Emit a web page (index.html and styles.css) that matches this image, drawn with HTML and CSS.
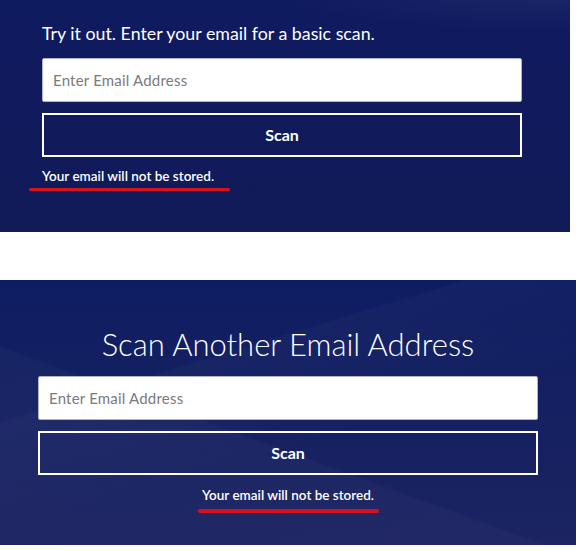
FILE: index.html
```html
<!DOCTYPE html>
<html lang="en">

<head>
    <meta charset="UTF-8">
    <title>Email Scan</title>
    <link rel="stylesheet" href="styles.css">
</head>

<body>
    <!-- basic scan -->
    <section class="panel panel-try">
        <h2 class="try-title">Try it out. Enter your email for a basic scan.</h2>
        <form class="scan-form">
            <input class="email-input" type="email" placeholder="Enter Email Address">
            <button class="scan-button" type="button">Scan</button>
        </form>
        <p class="note">Your email will not be stored.</p>
        <div class="red-rule"></div>
    </section>

    <!-- scan again -->
    <section class="panel panel-again">
        <h1 class="again-title">Scan Another Email Address</h1>
        <form class="scan-form">
            <input class="email-input" type="email" placeholder="Enter Email Address">
            <button class="scan-button" type="button">Scan</button>
        </form>
        <p class="note">Your email will not be stored.</p>
        <div class="red-rule"></div>
    </section>
</body>

</html>
```

FILE: styles.css
```css
/*--page------------------------------------------------------------------------*/
html {
    background: #fff;
}
body {
    margin: 0;
    padding: 0;
    font-family: Lato, "Open Sans", sans-serif;
    color: #fff;
}

.panel {
    box-sizing: border-box;
    display: flex;
    flex-direction: column;
    background-color: #101b5e;
}

/*--top block--------------------------------------------------------------------*/
.panel-try {
    width: 570px;
    height: 232px;
    padding: 20px 48px 0 42px;
    background-image:
        radial-gradient(ellipse 420px 60px at 560px -10px, rgba(255,255,255,0.05), rgba(255,255,255,0) 70%),
        linear-gradient(180deg, #0f1b60 0%, #121a58 100%);
}
.try-title {
    margin: 0;
    font-size: 17.8px;
    line-height: 26px;
    font-weight: 400;
}

/*--bottom block-----------------------------------------------------------------*/
.panel-again {
    width: 100%;
    height: 265px;
    margin-top: 48px;
    padding: 44px 38px 0 38px;
    align-items: center;
    background-image:
        linear-gradient(200deg, rgba(255,255,255,0) 0%, rgba(255,255,255,0) 58%, rgba(255,255,255,0.025) 58.5%, rgba(255,255,255,0.015) 100%),
        linear-gradient(163deg, rgba(255,255,255,0) 0%, rgba(255,255,255,0) 32%, rgba(255,255,255,0.025) 32.5%, rgba(255,255,255,0) 60%),
        linear-gradient(180deg, #0e1d62 0%, #1c2461 100%);
}
.again-title {
    margin: 0;
    font-size: 31px;
    line-height: 40px;
    font-weight: 300;
}

/*--form-------------------------------------------------------------------------*/
.scan-form {
    display: flex;
    flex-direction: column;
    gap: 11px;
    width: 480px;
    margin-top: 12px;
}
.panel-again .scan-form {
    width: 500px;
    margin-top: 12px;
}
.email-input {
    box-sizing: border-box;
    height: 44px;
    padding: 0 10px;
    border: 1px solid #aeb3c6;
    border-radius: 2px;
    background: #fff;
    font-family: inherit;
    font-size: 15px;
    letter-spacing: 0.2px;
    color: #333;
}
.email-input::placeholder {
    color: #7a7a80;
}
.scan-button {
    box-sizing: border-box;
    height: 44px;
    padding-bottom: 3px;
    border: 2px solid #fff;
    background: transparent;
    color: #fff;
    font-family: inherit;
    font-size: 16px;
    font-weight: 700;
}

.note {
    margin: 9px 0 0 0;
    font-size: 13.5px;
    line-height: 20px;
    font-weight: 600;
}
.panel-again .note {
    margin-top: 10px;
}

.red-rule {
    width: 201px;
    height: 3px;
    margin: 2px 0 0 -13px;
    border-radius: 2px;
    background: #d6121f;
}
.panel-again .red-rule {
    width: 181px;
    height: 4px;
    margin: 4px 0 0 0;
}
```
